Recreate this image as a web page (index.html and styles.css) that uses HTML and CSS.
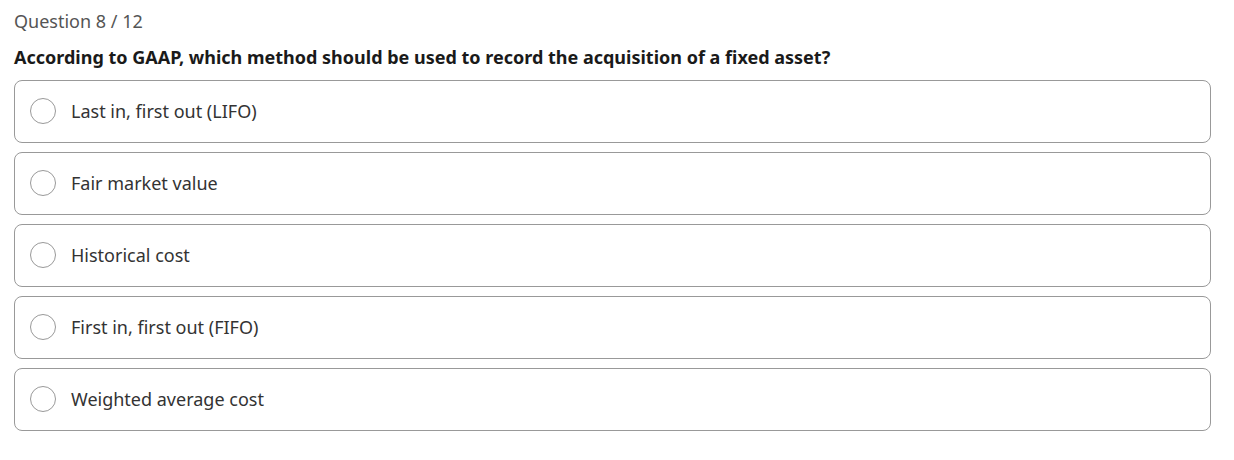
FILE: index.html
```html
<!DOCTYPE html>
<html lang="en">
<head>
<meta charset="utf-8">
<link rel="stylesheet" href="styles.css">
</head>
<body>
<div class="quiz">
  <div class="counter">Question 8 / 12</div>
  <h2 class="question">According to GAAP, which method should be used to record the acquisition of a fixed asset?</h2>
  <div class="options">
    <label class="option"><span class="radio"></span><span class="label">Last in, first out (LIFO)</span></label>
    <label class="option"><span class="radio"></span><span class="label">Fair market value</span></label>
    <label class="option"><span class="radio"></span><span class="label">Historical cost</span></label>
    <label class="option"><span class="radio"></span><span class="label">First in, first out (FIFO)</span></label>
    <label class="option"><span class="radio"></span><span class="label">Weighted average cost</span></label>
  </div>
</div>
</body>
</html>
```

FILE: styles.css
```css
html, body {
  margin: 0;
  padding: 0;
  background: #ffffff;
}
body {
  font-family: "Noto Sans", "Open Sans", sans-serif;
  color: #333333;
}
.quiz {
  padding: 9px 23px 0 14px;
}
.counter {
  font-size: 18px;
  line-height: 25px;
  color: #555555;
}
.question {
  margin: 11px 0 10px 0;
  font-size: 18px;
  line-height: 25px;
  font-weight: 700;
  color: #1a1a1a;
}
.options {
  display: flex;
  flex-direction: column;
  gap: 9px;
}
.option {
  display: flex;
  align-items: center;
  box-sizing: border-box;
  height: 63px;
  padding: 0 15px 2px 15px;
  border: 1px solid #999999;
  border-radius: 8px;
  gap: 15px;
  font-size: 18px;
  color: #333333;
}
.radio {
  width: 24px;
  height: 24px;
  border: 1px solid #999999;
  border-radius: 50%;
  flex: none;
}
```
